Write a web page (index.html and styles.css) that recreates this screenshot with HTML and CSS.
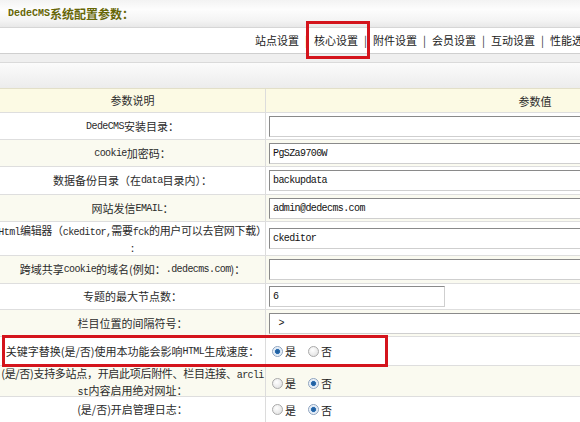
FILE: index.html
```html
<!DOCTYPE html>
<html lang="zh-CN">
<head>
<meta charset="utf-8">
<title>DedeCMS系统配置参数</title>
<link rel="stylesheet" href="styles.css">
</head>
<body>
<div class="page">
  <div class="titlebar"><span class="en-b">DedeCMS</span>系统配置参数：</div>
  <div class="tabs">
    <span class="tab">站点设置</span><span class="sep">|</span>
    <span class="tab">核心设置</span><span class="sep">|</span>
    <span class="tab">附件设置</span><span class="sep">|</span>
    <span class="tab">会员设置</span><span class="sep">|</span>
    <span class="tab">互动设置</span><span class="sep">|</span>
    <span class="tab">性能选项</span>
  </div>
  <div class="band"></div>
  <div class="toolbar"></div>

  <div class="cfg">
    <div class="row head h24"><div class="lab">参数说明</div><div class="val center">参数值</div></div>

    <div class="row"><div class="lab"><span class="en">DedeCMS</span>安装目录：</div><div class="val"><input class="txt" type="text" value=""></div></div>

    <div class="row alt"><div class="lab"><span class="en">cookie</span>加密码：</div><div class="val"><input class="txt" type="text" value="PgSZa9700W"></div></div>

    <div class="row h28"><div class="lab">数据备份目录（在<span class="en">data</span>目录内）：</div><div class="val"><input class="txt" type="text" value="backupdata"></div></div>

    <div class="row alt"><div class="lab">网站发信<span class="en">EMAIL</span>：</div><div class="val"><input class="txt" type="text" value="admin@dedecms.com"></div></div>

    <div class="row h34"><div class="lab lines"><span class="ln tight"><span class="en">Html</span>编辑器（<span class="en">ckeditor,</span>需要<span class="en">fck</span>的用户可以去官网下载）</span><span class="ln">:</span></div><div class="val"><input class="txt" type="text" value="ckeditor"></div></div>

    <div class="row alt h28"><div class="lab">跨域共享<span class="en">cookie</span>的域名(例如：<span class="en">.dedecms.com</span>)：</div><div class="val"><input class="txt" type="text" value=""></div></div>

    <div class="row h26"><div class="lab">专题的最大节点数：</div><div class="val"><input class="txt short" type="text" value="6"></div></div>

    <div class="row alt"><div class="lab">栏目位置的间隔符号：</div><div class="val"><input class="txt" type="text" value=" > "></div></div>

    <div class="row h29"><div class="lab">关键字替换(是/否)使用本功能会影响<span class="en">HTML</span>生成速度：</div><div class="val radios"><label><input class="rd" type="radio" name="r1" checked>是</label><label><input class="rd" type="radio" name="r1">否</label></div></div>

    <div class="row alt h31"><div class="lab lines"><span class="ln tight">(是/否)支持多站点，开启此项后附件、栏目连接、<span class="en">arcli</span></span><span class="ln"><span class="en">st</span>内容启用绝对网址：</span></div><div class="val radios"><label><input class="rd" type="radio" name="r2">是</label><label><input class="rd" type="radio" name="r2" checked>否</label></div></div>

    <div class="row h26"><div class="lab">(是/否)开启管理日志：</div><div class="val radios"><label><input class="rd" type="radio" name="r3">是</label><label><input class="rd" type="radio" name="r3" checked>否</label></div></div>
  </div>

  <div class="mark mark-tab"></div>
  <div class="mark mark-row"></div>
</div>
</body>
</html>
```

FILE: styles.css
```css
html, body {
  margin: 0;
  padding: 0;
  overflow: hidden;
  background: #fff;
}

.page {
  position: relative;
  width: 804px;
  font-family: "Noto Sans CJK SC", "Liberation Sans", sans-serif;
  font-size: 11px;
  color: #2b2b2b;
}

.en {
  font-family: "Liberation Mono", monospace;
  font-size: 10px;
  letter-spacing: -0.6px;
}

.en-b {
  font-family: "Liberation Mono", monospace;
  font-size: 10px;
  font-weight: bold;
}

.titlebar {
  height: 28px;
  box-sizing: border-box;
  border-bottom: 1px solid #d6d6d6;
  background: linear-gradient(#f3f3f3, #fdfdfd 35%, #f4f4f4 75%, #e8e8e8);
  display: flex;
  align-items: center;
  padding-left: 8px;
  font-weight: bold;
  font-size: 12px;
  color: #666606;
  line-height: 1;
}

.tabs {
  height: 26px;
  box-sizing: border-box;
  border-bottom: 1px solid #cfcfcf;
  display: flex;
  align-items: center;
  padding-left: 255px;
  white-space: nowrap;
  line-height: 1;
  color: #222;
}

.tab {
  display: inline-block;
}

.sep {
  display: inline-block;
  margin: 0 6px;
  color: #333;
}

.band {
  height: 9px;
  box-sizing: border-box;
  background: #efefef;
  border-bottom: 1px solid #dadada;
}

.toolbar {
  height: 26px;
  box-sizing: border-box;
  background: linear-gradient(#fbfbfb, #ececec);
  border-bottom: 1px solid #e2dfc8;
}

.cfg {
  display: flex;
  flex-direction: column;
}

.row {
  display: grid;
  grid-template-columns: 266px 1fr;
  height: 27px;
  box-sizing: border-box;
  border-bottom: 1px solid #dedede;
  background: #fff;
}

.row.alt {
  background: #fafaf0;
}

.row.head {
  background: #fcfae4;
}

.h24 { height: 24px; }
.h26 { height: 26px; }
.h28 { height: 28px; }
.h29 { height: 29px; }
.h31 { height: 31px; }
.h34 { height: 34px; }

.lab {
  border-right: 1px solid #dcdcdc;
  display: flex;
  align-items: center;
  justify-content: center;
  white-space: nowrap;
  line-height: 15px;
  color: #2b2b2b;
}

.lab.lines {
  flex-direction: column;
  justify-content: center;
  align-items: center;
}

.ln {
  display: block;
  white-space: nowrap;
}

.ln.tight {
  letter-spacing: -0.3px;
}

.val {
  display: flex;
  align-items: center;
  padding-left: 3px;
}

.val.center {
  justify-content: center;
  padding-left: 0;
}

.txt {
  width: 480px;
  height: 21px;
  box-sizing: border-box;
  margin: 0;
  padding: 0 0 0 3px;
  border: 1px solid;
  border-color: #8a8a8a #cfcfcf #cfcfcf #8a8a8a;
  background: #fff;
  font-family: "Liberation Mono", monospace;
  font-size: 10px;
  letter-spacing: -0.6px;
  color: #111;
  outline: none;
}

.txt.short {
  width: 176px;
}

.radios {
  gap: 12px;
  padding-left: 6px;
}

.radios label {
  display: flex;
  align-items: center;
  gap: 1px;
  color: #222;
}

.rd {
  appearance: none;
  -webkit-appearance: none;
  width: 11px;
  height: 11px;
  margin: 0 1px 0 0;
  border: 1px solid #a9a9a9;
  border-radius: 50%;
  box-sizing: border-box;
  background: radial-gradient(circle at 40% 35%, #ffffff, #dcdcdc);
}

.rd:checked {
  border-color: #8da3bf;
  background: radial-gradient(circle, #1d5a96 0, #2a6cb0 2.2px, #cfe0f2 2.8px, #eef3f9 4px);
}

.mark {
  position: absolute;
  border: 3px solid #d4141c;
  box-sizing: border-box;
  pointer-events: none;
}

.mark-tab {
  left: 306px;
  top: 21px;
  width: 64px;
  height: 38px;
}

.mark-row {
  left: 2px;
  top: 335px;
  width: 386px;
  height: 32px;
}
```
